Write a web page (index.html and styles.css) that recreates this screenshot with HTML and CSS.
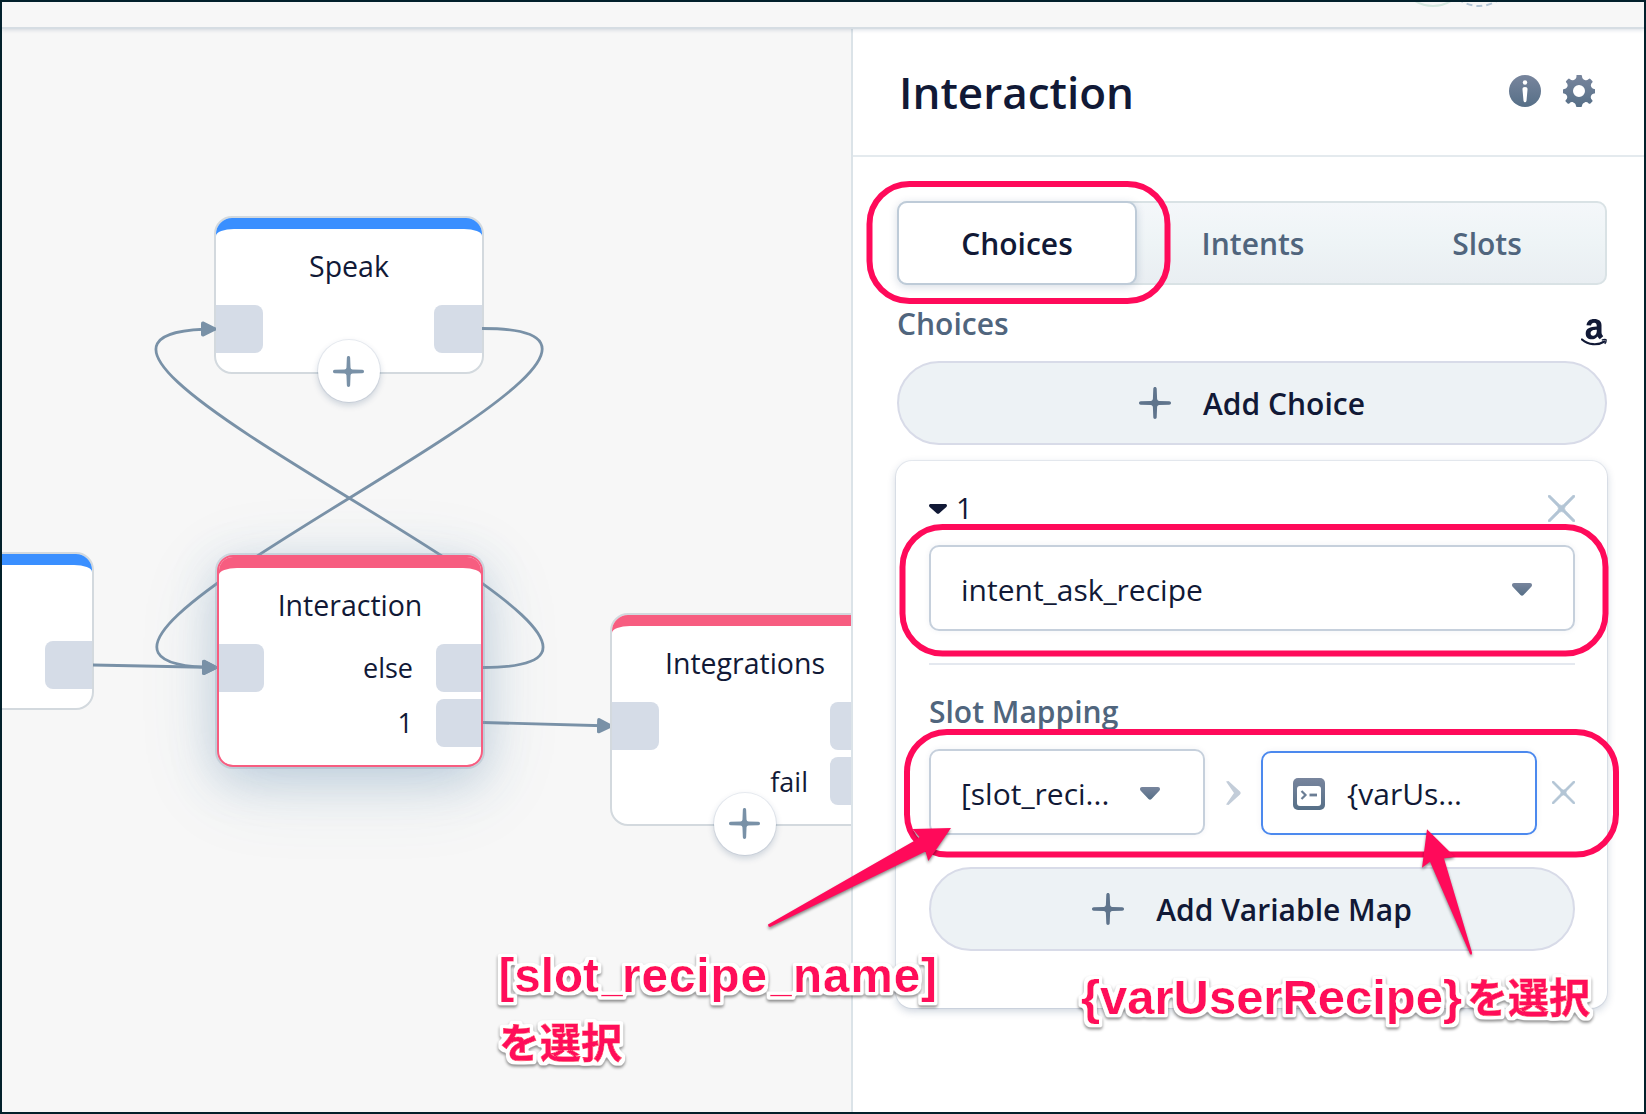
FILE: index.html
```html
<!DOCTYPE html>
<html lang="ja">
<head>
<meta charset="utf-8">
<title>Interaction</title>
<link rel="stylesheet" href="styles.css">
</head>
<body>
<svg class="defs" width="0" height="0" aria-hidden="true">
  <defs>
    <linearGradient id="slate" x1="0" y1="0" x2="0" y2="1"><stop offset="0" stop-color="#78859d"/><stop offset="1" stop-color="#566f87"/></linearGradient>
    <symbol id="plus" viewBox="0 0 32 32"><path d="M16 0c1 0 1.6.7 1.7 1.7l.4 10.1c.1 1.2.9 2 2.1 2.1l10.1.4c1 .1 1.7.7 1.7 1.7s-.7 1.6-1.7 1.7l-10.1.4c-1.200.1-2 .9-2.100 2.100l-.4 10.100c-.1 1-.7 1.700-1.700 1.700s-1.600-.7-1.700-1.700l-.4-10.100c-.1-1.200-.9-2-2.100-2.100l-10.100-.4C.7 17.600 0 17 0 16s.7-1.600 1.700-1.700l10.100-.4c1.200-.1 2-.9 2.100-2.100l.4-10.100C14.400.7 15 0 16 0z"/></symbol>
    <symbol id="cross" viewBox="0 0 28 28"><path fill="#b3c5d5" stroke="#b3c5d5" stroke-width=".7" d="M.4.4Q1.200-.4 2.200.4L12 10q2 1.700 4 0L25.800.4q1-.8 1.800 0t0 1.800L18 12q-1.700 2 0 4l9.600 9.800q.8 1 0 1.800t-1.800 0L16 18q-2-1.700-4 0l-9.800 9.600q-1 .8-1.800 0t0-1.800L10 16q1.700-2 0-4L.4 2.200q-.8-1 0-1.800z"/></symbol>
    <symbol id="caret" viewBox="0 0 20 13"><path d="M2 0h16c2 0 2.600 2 1.300 3.800L11.500 12q-1.500 1.600-3 0L.7 3.800C-.6 2 0 0 2 0z"/></symbol>
    <marker id="arrow" markerUnits="userSpaceOnUse" markerWidth="16" markerHeight="16" refX="15" refY="8" orient="auto"><path d="M0 2.500Q0 0 2.500.5L14 6.200q2 1.800 0 3.600L2.500 15.500Q0 16 0 13.500z" fill="#7991a7"/></marker>
    <filter id="outline" x="-5%" y="-20%" width="110%" height="140%">
      <feMorphology in="SourceAlpha" operator="dilate" radius="3" result="fat"/>
      <feGaussianBlur in="fat" stdDeviation="1" result="soft"/>
      <feComponentTransfer in="soft" result="edge"><feFuncR type="linear" slope="0" intercept="1"/><feFuncG type="linear" slope="0" intercept="1"/><feFuncB type="linear" slope="0" intercept="1"/><feFuncA type="linear" slope="3" intercept="-.6"/></feComponentTransfer>
      <feMerge><feMergeNode in="edge"/><feMergeNode in="SourceGraphic"/></feMerge>
    </filter>
  </defs>
</svg>
<div class="app">
  <header class="topbar">
    <svg class="avatars" viewBox="0 0 120 25" width="120" height="25">
      <circle cx="31" cy="-30" r="34" fill="none" stroke="#d5e7df" stroke-width="2"/>
      <circle cx="77" cy="-30" r="34" fill="none" stroke="#b3c5d5" stroke-width="2" stroke-dasharray="6 4"/>
    </svg>
  </header>
  <div class="workspace">
    <main class="canvas">
      <div class="node blue n-left"><div class="cap"></div><div class="body"></div><i class="port out"></i></div>
      <div class="node blue n-speak"><div class="cap"></div><div class="body">Speak</div><i class="port in"></i><i class="port out"></i></div>
      <div class="glow"></div>
      <svg class="links" width="849" height="1083" viewBox="2 29 849 1083">
        <g fill="none" stroke="#7991a7" stroke-width="2.800">
          <path d="M482 328.500C767 328.500-68 667.500 217 667.500" marker-end="url(#arrow)"/>
          <path d="M483 667.500C768 667.500-69 329 216 329" marker-end="url(#arrow)"/>
          <path d="M93 665L217 667.500" marker-end="url(#arrow)"/>
          <path d="M483 722.500L612 726" marker-end="url(#arrow)"/>
        </g>
      </svg>
      <div class="node pink active n-inter"><div class="cap"></div><div class="body">Interaction</div><i class="port in"></i><i class="port out"></i><i class="port out two"></i><span class="lbl l-else">else</span><span class="lbl l-one">1</span></div>
      <div class="node pink n-integ"><div class="cap"></div><div class="body">Integrations</div><i class="port in"></i><i class="port out"></i><i class="port out two"></i><span class="lbl l-fail">fail</span></div>
      <div class="add a-speak"><svg width="31" height="31"><use href="#plus"/></svg></div>
      <div class="add a-integ"><svg width="31" height="31"><use href="#plus"/></svg></div>
    </main>
    <aside class="panel">
      <div class="panel-head">
        <h1>Interaction</h1>
        <div class="tools">
          <svg width="32" height="32" viewBox="0 0 32 32"><circle cx="16" cy="16" r="16" fill="url(#slate)"/><circle cx="16" cy="7.500" r="2.200" fill="#fff"/><path d="M16 12c2 0 2.700 1 2.500 2.800l-1 11q-.3 1.500-1.500 1.500t-1.500-1.500l-1-11C13.300 13 14 12 16 12z" fill="#fff"/></svg>
          <svg width="32" height="32" viewBox="0 0 32 32"><path fill="url(#slate)" fill-rule="evenodd" d="M14 0h4q1 0 1 1.200c.1 2.300 1.300 3.300 2.700 3.900 1.600.6 2.700.2 4-1.100q.9-.8 1.700 0l1.900 1.900q.7.800-.1 1.700c-1.200 1.200-1.700 2.600-1.100 4 .6 1.500 1.700 2.300 3.300 2.400q1.100.1 1.100 1v2.400q0 1-1.100 1c-1.800.1-2.800 1.100-3.400 2.500-.6 1.500-.1 2.800 1.100 4q.9.900.2 1.700l-1.900 1.900q-.8.700-1.700-.1c-1.300-1.300-2.600-1.600-4-1-1.500.6-2.600 1.700-2.700 3.500q0 1.100-1 1.100h-4q-1 0-1-1.100c-.1-1.800-1.200-2.900-2.700-3.500-1.400-.6-2.700-.3-4 1q-.9.800-1.700.1l-1.900-1.900q-.7-.8.200-1.700c1.200-1.200 1.700-2.500 1.100-4-.6-1.400-1.600-2.400-3.400-2.500Q0 18.400 0 17.400V15q0-.9 1.100-1c1.600-.1 2.700-.9 3.300-2.400.6-1.400.1-2.800-1.100-4q-.8-.9-.1-1.700L5.100 4q.8-.8 1.700 0c1.300 1.300 2.400 1.700 4 1.100 1.400-.6 2.600-1.600 2.700-3.900Q13 0 14 0zM16 10a6 6 0 1 0 0 12 6 6 0 0 0 0-12z"/></svg>
        </div>
      </div>
      <div class="panel-body">
        <nav class="tabs"><a class="tab on">Choices</a><a class="tab">Intents</a><a class="tab">Slots</a></nav>
        <div class="section">
          <span class="label">Choices</span>
          <svg class="amazon" width="26" height="27" viewBox="0 0 26 27"><path fill="#111936" fill-rule="evenodd" d="M5.500 6.200C6 2 9 0 13.200 0c4.600 0 7.300 2.200 7.300 6.300v7c0 1.800.8 2.700 1.700 3.900l-3.400 3c-1-.9-1.700-1.700-2.200-2.700-1.800 2-3.600 2.800-6 2.800-3.600 0-5.900-2.300-5.900-5.900 0-5.100 4.200-6.800 11.100-7 0-2.300-.5-3.700-2.700-3.700-1.700 0-2.700.9-3.100 2.800zM15.800 10.700c-3.400 0-6.200.7-6.200 3.600 0 1.500.8 2.500 2.200 2.500 3.100 0 4.100-2.700 4-6.100z"/><path d="M1 20.500c6.500 5.600 15.500 6.200 22.500 2" fill="none" stroke="#111936" stroke-width="2.200" stroke-linecap="round"/><path d="M20.800 21.200q2.600-1.200 4.200-.5.500 2.200-1.300 4.200" fill="none" stroke="#111936" stroke-width="1.300"/></svg>
        </div>
        <button class="pill"><svg width="32" height="32"><use href="#plus"/></svg>Add Choice</button>
        <section class="card">
          <div class="card-head"><svg class="mini" width="18" height="10" viewBox="0 0 20 13" preserveAspectRatio="none"><use href="#caret"/></svg><span>1</span><svg class="close" width="27" height="27"><use href="#cross"/></svg></div>
          <div class="select wide"><span>intent_ask_recipe</span><svg width="20" height="13"><use href="#caret"/></svg></div>
          <hr>
          <div class="label map">Slot Mapping</div>
          <div class="maprow">
            <div class="select slot"><span>[slot_reci...</span><svg width="20" height="13"><use href="#caret"/></svg></div>
            <svg class="chev" width="16" height="24" viewBox="0 0 16 24"><path d="M1 .5L3.500 0 15 10.500q1.300 1.500 0 3L3.500 24 1 23.500 9 12z" fill="#c3cdd9"/></svg>
            <div class="select var"><svg width="32" height="32" viewBox="0 0 32 32"><rect width="32" height="32" rx="5" fill="url(#slate)"/><rect x="4" y="8" width="24" height="20" rx="3" fill="#fff"/><path d="M8.500 13l4 4-4 4" fill="none" stroke="#6b7d94" stroke-width="2.200"/><path d="M16.500 17h7.500" stroke="#6b7d94" stroke-width="2.800"/></svg><span>{varUs...</span></div>
            <svg class="remove" width="23" height="23"><use href="#cross"/></svg>
          </div>
          <button class="pill inner"><svg width="32" height="32"><use href="#plus"/></svg>Add Variable Map</button>
        </section>
      </div>
    </aside>
  </div>
</div>
<svg class="notes" width="1646" height="1114" viewBox="0 0 1646 1114">
  <g class="rings">
    <rect x="869.500" y="184" width="298" height="117" rx="40"/>
    <rect x="902.500" y="527" width="703" height="126.500" rx="40"/>
    <rect x="907" y="732" width="709" height="122.500" rx="40"/>
  </g>
  <g class="arrows">
    <path d="M768 924.500L914 841l5.500-4-7-8 38.500-1-22.700 33-2.800-9.500L770 927q-2 0-2-2.500z"/>
    <path d="M1427 829.300l27.500 27.200-10.500 2 28 94q0 3.500-2 1.500L1430 861.700l-8 6z"/>
  </g>
  <g class="captions">
    <g filter="url(#outline)">
      <text><tspan x="498.500" y="992">[slot</tspan><tspan class="us" x="601.500" y="992">_</tspan><tspan class="mid" x="622" y="992">recipe</tspan><tspan class="us" x="770.500" y="992">_</tspan><tspan class="mid" x="793" y="992">name]</tspan></text>
      <text class="ja" x="499" y="1058">を選択</text>
    </g>
    <g filter="url(#outline)">
      <text x="1081" y="1014" textLength="381" lengthAdjust="spacingAndGlyphs">{varUserRecipe}</text>
      <text class="ja" x="1467" y="1013">を選択</text>
    </g>
  </g>
</svg>
</body>
</html>
```
FILE: styles.css
```css
* { box-sizing: border-box; }
body { margin: 0; font-family: "Open Sans", "Noto Sans", sans-serif; color: #111936; overflow: hidden; }
.defs { position: absolute; }
.app { width: 1646px; height: 1114px; border: 2px solid #03212b; display: flex; flex-direction: column; background: #f7f7f7; }
.topbar { height: 27px; flex: none; border-bottom: 2px solid #d6dde3; background: #f7f7f7; box-shadow: 0 1px 4px rgba(17, 49, 96, .16); position: relative; z-index: 2; display: flex; justify-content: flex-end; padding-right: 122px; }
.workspace { flex: 1; display: flex; min-height: 0; }
.canvas { width: 849px; flex: none; position: relative; overflow: hidden; font-size: 28.500px; }
.links { position: absolute; left: 0; top: 0; }

/* Diagram nodes */
.node { position: absolute; width: 270px; height: 158px; border: 2px solid #d3d9de; border-radius: 18px; background: #fff; }
.node .cap { height: 24px; border-radius: 16px 16px 0 0; }
.blue .cap { background: #3a8fff; }
.pink .cap { background: #f75d80; }
.node .body { margin-top: -13px; height: 120px; background: #fff; border-radius: 18px 18px 0 0 / 7px 7px 0 0; text-align: center; line-height: 40px; padding-top: 17px; }
.port { position: absolute; top: 87px; width: 47px; height: 48px; background: #d5dce7; }
.port.in { left: 0; border-radius: 0 8px 8px 0; }
.port.out { right: 0; width: 48px; border-radius: 8px 0 0 8px; }
.port.two { top: 142px; }
.lbl { position: absolute; line-height: 40px; font-size: 27px; }
.n-left { left: -178px; top: 523px; }
.n-left .port.out { width: 47px; }
.n-speak { left: 212px; top: 187px; }
.n-inter { left: 215px; top: 526px; width: 266px; height: 212px; border-color: #f75d80; border-radius: 16px; box-shadow: 0 0 0 2px rgba(140, 160, 180, .3); }
.n-inter .cap { border-radius: 14px 14px 0 0; }
.n-inter .body { padding-top: 16.500px; }
.n-inter .port, .n-inter .port.out { width: 45px; }
.n-integ { left: 608px; top: 584px; width: 270px; height: 213px; }
.glow { position: absolute; left: 215px; top: 526px; width: 266px; height: 212px; border-radius: 15px; box-shadow: 0 18px 84px rgba(60, 115, 150, .12), 0 12px 46px rgba(60, 115, 165, .26); }
.l-else { right: 68px; top: 91px; }
.l-one { right: 68px; top: 146px; }
.l-fail { right: 70px; top: 147px; }
.add { position: absolute; width: 62px; height: 62px; border-radius: 50%; background: #fff; display: flex; align-items: center; justify-content: center; fill: #7991a7; box-shadow: 0 0 0 1px rgba(17, 49, 96, .07), 0 3px 7px rgba(17, 49, 96, .2); }
.a-speak { left: 315.500px; top: 311px; }
.a-integ { left: 711.500px; top: 763.500px; }

/* Side panel */
.panel { flex: 1; min-width: 0; background: #fff; border-left: 2px solid #dbe3e8; }
.panel-head { height: 128px; border-bottom: 2px solid #e4eaee; display: flex; align-items: center; justify-content: space-between; padding: 0 49px 0 46px; }
h1 { margin: 0; font-size: 44px; line-height: 60px; font-weight: 600; }
.tools { display: flex; gap: 22px; margin-top: -2px; }
.panel-body { padding: 44px 37px 0 44px; font-size: 30px; line-height: 40px; }
.tabs { display: flex; height: 84px; border: 2px solid #d9e2e5; border-radius: 10px; background: linear-gradient(#f4f7fa, #eef4f6 50%, #e9eef2); }
.tab { flex: 1; display: flex; align-items: center; justify-content: center; font-weight: 600; color: #50657d; padding: 2px 2px 0 0; }
.tab.on { flex: 0 0 240px; margin: -2px 0 -2px -2px; padding-right: 0; background: #fff; border: 2px solid #becbd8; border-radius: 10px; color: #111936; box-shadow: 0 2px 8px rgba(17, 49, 96, .17); }
.section { height: 57px; margin-top: 19px; display: flex; justify-content: space-between; }
.amazon { margin-top: 15px; }
.label { font-weight: 600; color: #50657d; }
.pill { display: flex; width: 100%; height: 84px; align-items: center; justify-content: center; gap: 32px; border: 2px solid #d8dbe8; border-radius: 42px; background: #edf2f5; color: #111936; font: 600 30px/40px "Open Sans", "Noto Sans", sans-serif; fill: #5f748c; padding: 2px 0 0; }
.pill svg { margin-top: -2px; }
.card { margin: 16px 0 0 -1px; padding: 22px 32px 57px 33px; border-radius: 16px; box-shadow: 0 0 0 1px rgba(17, 49, 96, .07), 0 3px 8px rgba(17, 49, 96, .22); }
.card-head { height: 50px; display: flex; align-items: center; margin-bottom: 12px; font-size: 29px; }
.mini { fill: #111936; margin: 2px 9px 0 0; }
.close { margin-left: auto; }
.select { height: 86px; border: 2px solid #c6d0dc; border-radius: 10px; display: flex; align-items: center; justify-content: space-between; padding: 3px 41px 0 30px; fill: url(#slate); box-shadow: 0 0 6px rgba(17, 49, 96, .06); flex: none; }
.select > svg { margin-top: -1px; }
hr { margin: 32px 0 0; border: 0; height: 2px; background: #e4e8ef; }
.map { margin-top: 27px; }
.maprow { display: flex; align-items: flex-end; margin-top: 17px; }
.slot { width: 276px; padding-right: 43px; }
.chev { flex: none; margin: 0 20px 30px; }
.var { width: 276px; height: 84px; border-color: #4c89ee; justify-content: flex-start; gap: 22px; padding-top: 2px; }
.remove { margin: 0 0 31px 15px; flex: none; }
.inner { margin-top: 32px; }

/* Annotations laid over the whole screen */
.notes { position: absolute; left: 0; top: 0; z-index: 5; }
.rings { fill: none; stroke: #ff0a5a; stroke-width: 6; }
.arrows { fill: #ff0a5a; filter: drop-shadow(0 2px 1.500px rgba(0, 0, 0, .45)); }
.captions { font: bold 47.500px "Liberation Sans", Arial, sans-serif; fill: #ff0a5a; filter: drop-shadow(0 2px 1.500px rgba(0, 0, 0, .45)); }
.us { font-size: 38px; }
.mid { letter-spacing: 1px; }
.ja { font: bold 41px "Noto Sans CJK JP", sans-serif; stroke: #ff0a5a; stroke-width: .8px; }
```
